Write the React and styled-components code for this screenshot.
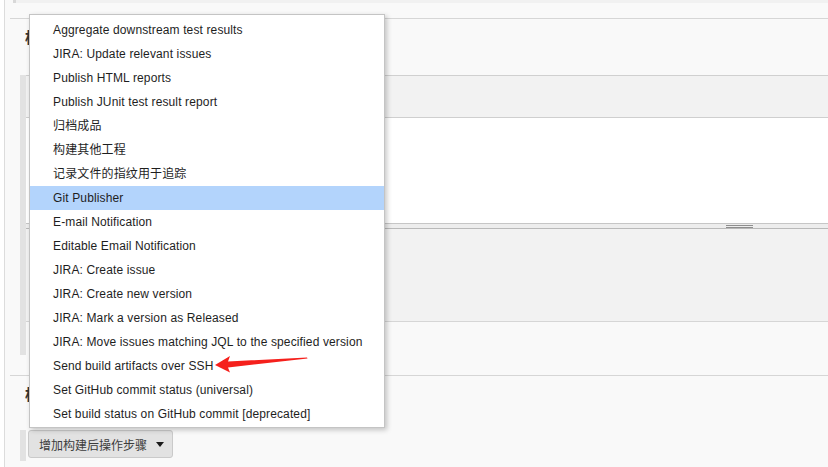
import React from "react";
import styled, { createGlobalStyle } from "styled-components";

const GlobalStyle = createGlobalStyle`
  html, body { margin: 0; padding: 0; background: #fff; }
  body { font-family: "Liberation Sans", Arial, "Noto Sans CJK SC", sans-serif; }
  * { box-sizing: border-box; }
`;

const Page = styled.div`
  position: relative;
  width: 828px;
  height: 467px;
  overflow: hidden;
  padding-left: 4px;
  background: #fff;
`;

const Main = styled.div`
  height: 100%;
  border-left: 1px solid #dcdcdc;
  background: #f9f9f9;
`;

const TopStrip = styled.div`
  margin-left: 8px;
  height: 3px;
  background: #f1f1f1;
  border-left: 3px solid #d8d8d8;
`;

const Section = styled.section`
  margin-left: 5px;
  margin-top: ${(p) => p.$gap}px;
  border-top: 1px solid #d6d6d6;
`;

const SectionTitle = styled.h2`
  margin: 0;
  height: ${(p) => p.$h}px;
  padding: 8px 0 0 15px;
  font-family: "Noto Sans CJK SC", sans-serif;
  font-size: 15px;
  line-height: 20px;
  font-weight: bold;
  color: #333;
`;

const Block = styled.div`
  margin-left: 10px;
  border-left: 6px solid #e2e2e2;
  display: flex;
  flex-direction: column;
`;

const BlockHeader = styled.div`
  height: 42px;
  background: #f2f2f2;
  border-top: 1px solid #d0d0d0;
`;

const Editor = styled.div`
  height: 106px;
  background: #fff;
  border-top: 1px solid #cfcfcf;
`;

const GripBar = styled.div`
  height: 6px;
  background: #ededed;
  border-top: 1px solid #c6c6c6;
  border-bottom: 1px solid #b9b9b9;
  display: flex;
  justify-content: flex-end;
  align-items: center;
  padding-right: 75px;
`;

const Grip = styled.div`
  width: 27px;
  height: 3px;
  border-top: 1px solid #8e8e8e;
  border-bottom: 1px solid #8e8e8e;
`;

const Advanced = styled.div`
  height: 92px;
  background: #f2f2f2;
`;

const BlockFoot = styled.div`
  height: 34px;
  border-top: 1px solid #d6d6d6;
  background: #f9f9f9;
`;

const ButtonRow = styled.div`
  margin-left: 10px;
  height: 31px;
  border-left: 6px solid #e2e2e2;
  padding-left: 2px;
  display: flex;
  align-items: flex-start;
`;

const AddButton = styled.button`
  height: 28px;
  padding: 0 8px 0 10px;
  display: flex;
  align-items: center;
  gap: 9px;
  background: #e2e2e2;
  border: 1px solid #cacaca;
  border-radius: 3px;
  font-family: "Noto Sans CJK SC", sans-serif;
  font-size: 12px;
  color: #3c3c3c;
  cursor: pointer;
`;

const Caret = styled.span`
  width: 0;
  height: 0;
  border-left: 4px solid transparent;
  border-right: 4px solid transparent;
  border-top: 5px solid #1a1a1a;
`;

const Menu = styled.ul`
  position: absolute;
  left: 29px;
  top: 14px;
  width: 356px;
  margin: 0;
  padding: 3px 0 1px;
  list-style: none;
  background: #fff;
  border: 1px solid #c4c4c4;
  box-shadow: 2px 2px 5px rgba(0, 0, 0, 0.22);
`;

const MenuItem = styled.li`
  height: 24px;
  line-height: 24px;
  padding-left: 23px;
  font-family: "Liberation Sans", Arial, "Noto Sans CJK SC", sans-serif;
  font-size: 12px;
  letter-spacing: 0.13px;
  color: #1e1e1e;
  white-space: nowrap;
  background: ${(p) => (p.$active ? "#b3d4fc" : "transparent")};
`;

const Arrow = styled.svg`
  position: absolute;
  left: 210px;
  top: 350px;
`;

const items = [
  "Aggregate downstream test results",
  "JIRA: Update relevant issues",
  "Publish HTML reports",
  "Publish JUnit test result report",
  "归档成品",
  "构建其他工程",
  "记录文件的指纹用于追踪",
  "Git Publisher",
  "E-mail Notification",
  "Editable Email Notification",
  "JIRA: Create issue",
  "JIRA: Create new version",
  "JIRA: Mark a version as Released",
  "JIRA: Move issues matching JQL to the specified version",
  "Send build artifacts over SSH",
  "Set GitHub commit status (universal)",
  "Set build status on GitHub commit [deprecated]",
];

export default function App() {
  return (
    <>
      <GlobalStyle />
      <Page>
        <Main>
          <TopStrip />
          <Section $gap={15}>
            <SectionTitle $h={56}>构建</SectionTitle>
            <Block>
              <BlockHeader />
              <Editor />
              <GripBar>
                <Grip />
              </GripBar>
              <Advanced />
              <BlockFoot />
            </Block>
          </Section>
          <Section $gap={20}>
            <SectionTitle $h={54}>构建后操作</SectionTitle>
            <ButtonRow>
              <AddButton>
                增加构建后操作步骤
                <Caret />
              </AddButton>
            </ButtonRow>
          </Section>
        </Main>
        <Menu>
          {items.map((t) => (
            <MenuItem key={t} $active={t === "Git Publisher"}>
              {t}
            </MenuItem>
          ))}
        </Menu>
        <Arrow width="102" height="26" viewBox="210 350 102 26">
          <polygon
            points="215,365 230,356 228,361.5 307,357.5 307.5,358.6 228,367.5 230,372.5"
            fill="#f5201c"
          />
        </Arrow>
      </Page>
    </>
  );
}
